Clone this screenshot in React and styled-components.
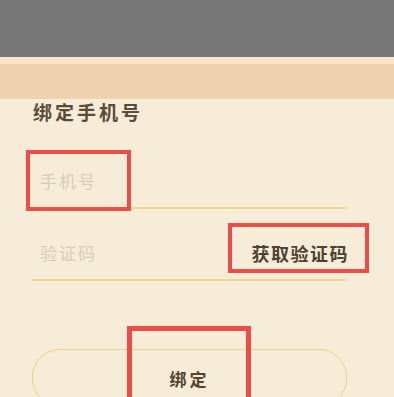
import React from "react";
import styled, { createGlobalStyle } from "styled-components";

const GlobalStyle = createGlobalStyle`
  html, body {
    margin: 0;
    padding: 0;
    background: #f7ecd8;
    font-family: "Noto Sans CJK SC", "Noto Sans", sans-serif;
    overflow: hidden;
  }
`;

const Page = styled.div`
  width: 394px;
  height: 397px;
  overflow: hidden;
  display: flex;
  flex-direction: column;
`;

const Dim = styled.div`
  height: 57px;
  flex-shrink: 0;
  background: #777777;
`;

const SheetHeader = styled.div`
  height: 35px;
  flex-shrink: 0;
  background: #efd3b1;
  border-top: 7px solid #fae4c9;
`;

const Body = styled.div`
  padding: 0 47px 0 32px;
  display: flex;
  flex-direction: column;
`;

const Title = styled.div`
  margin: 0 0 0 1px;
  font-size: 19px;
  line-height: 26px;
  font-weight: 700;
  letter-spacing: 3px;
  color: #5b4b37;
`;

const Field = styled.div`
  position: relative;
  height: ${(p) => p.$height}px;
  display: flex;
  align-items: flex-end;
  justify-content: space-between;
  padding: 0 0 15px 8px;
  box-sizing: border-box;
  border-bottom: 2px solid #f1d593;
`;

const Placeholder = styled.span`
  font-size: 17px;
  line-height: 22px;
  letter-spacing: 2px;
  color: #d8cdb8;
`;

const CodeButton = styled.span`
  font-size: 18px;
  line-height: 22px;
  font-weight: 700;
  letter-spacing: 1.5px;
  color: #4f4030;
  margin-right: -2px;
`;

const SubmitButton = styled.div`
  position: relative;
  margin-top: 68px;
  height: 56px;
  border: 1.5px solid #eecf8b;
  border-radius: 28px;
  display: flex;
  align-items: center;
  justify-content: center;
  font-size: 17px;
  font-weight: 700;
  letter-spacing: 3px;
  color: #54452f;
`;

const Highlight = styled.div`
  position: absolute;
  left: ${(p) => p.$left}px;
  top: ${(p) => p.$top}px;
  width: ${(p) => p.$width}px;
  height: ${(p) => p.$height}px;
  border: ${(p) => p.$stroke || 4.5}px solid #ea4e47;
  box-sizing: border-box;
  pointer-events: none;
`;

export default function App() {
  return (
    <Page>
      <GlobalStyle />
      <Dim />
      <SheetHeader />
      <Body>
        <Title>绑定手机号</Title>
        <Field $height={84}>
          <Placeholder>手机号</Placeholder>
          <Highlight $left={-6} $top={25} $width={105} $height={61} />
        </Field>
        <Field $height={72}>
          <Placeholder>验证码</Placeholder>
          <CodeButton>获取验证码</CodeButton>
          <Highlight $left={196} $top={14} $width={141} $height={50} />
        </Field>
        <SubmitButton>
          绑定
          <Highlight $left={94} $top={-24} $width={124} $height={90} $stroke={5} />
        </SubmitButton>
      </Body>
    </Page>
  );
}
